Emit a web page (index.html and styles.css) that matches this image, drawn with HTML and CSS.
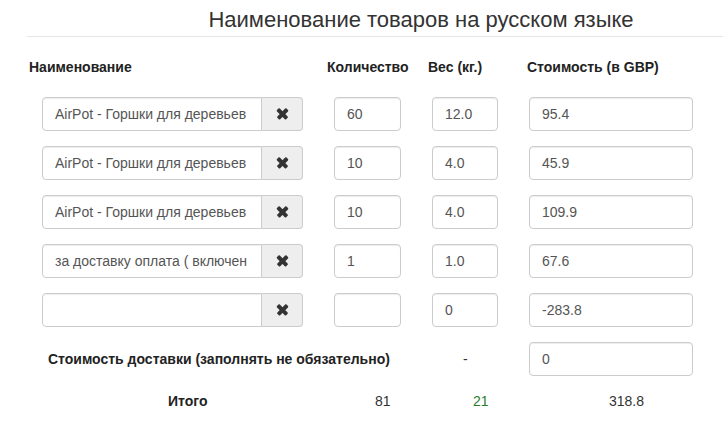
FILE: index.html
```html
<!DOCTYPE html>
<html>
<head>
<meta charset="utf-8">
<title>Товары</title>
<link rel="stylesheet" href="styles.css">
</head>
<body>

<div class="page">
    <h3 class="title">Наименование товаров на русском языке</h3>
    <hr class="line">

    <div class="sheet">
        <div class="th">Наименование</div>
        <div class="th th-qty">Количество</div>
        <div class="th th-w">Вес (кг.)</div>
        <div class="th th-cost">Стоимость (в GBP)</div>

        <div class="group"><input class="field name" value="AirPot - Горшки для деревьев"><span class="del"><i class="ico-x"></i></span></div>
        <div class="c-qty"><input class="field qty" value="60"></div>
        <div class="c-w"><input class="field w" value="12.0"></div>
        <div class="c-cost"><input class="field cost" value="95.4"></div>

        <div class="group"><input class="field name" value="AirPot - Горшки для деревьев"><span class="del"><i class="ico-x"></i></span></div>
        <div class="c-qty"><input class="field qty" value="10"></div>
        <div class="c-w"><input class="field w" value="4.0"></div>
        <div class="c-cost"><input class="field cost" value="45.9"></div>

        <div class="group"><input class="field name" value="AirPot - Горшки для деревьев"><span class="del"><i class="ico-x"></i></span></div>
        <div class="c-qty"><input class="field qty" value="10"></div>
        <div class="c-w"><input class="field w" value="4.0"></div>
        <div class="c-cost"><input class="field cost" value="109.9"></div>

        <div class="group"><input class="field name" value="за доставку оплата ( включен"><span class="del"><i class="ico-x"></i></span></div>
        <div class="c-qty"><input class="field qty" value="1"></div>
        <div class="c-w"><input class="field w" value="1.0"></div>
        <div class="c-cost"><input class="field cost" value="67.6"></div>

        <div class="group"><input class="field name" value=""><span class="del"><i class="ico-x"></i></span></div>
        <div class="c-qty"><input class="field qty" value=""></div>
        <div class="c-w"><input class="field w" value="0"></div>
        <div class="c-cost"><input class="field cost" value="-283.8"></div>

        <div class="ship-label">Стоимость доставки (заполнять не обязательно)</div>
        <div class="ship-dash">-</div>
        <div class="c-cost"><input class="field cost" value="0"></div>

        <div class="total total-label">Итого</div>
        <div class="total total-qty">81</div>
        <div class="total total-w">21</div>
        <div class="total total-cost">318.8</div>
    </div>
</div>

</body>
</html>
```

FILE: styles.css
```css
*{ box-sizing:border-box;}
body{ margin:0; font-family:"Liberation Sans", Arial, sans-serif; font-size:14px; color:#333; background:#fff;}

.title{ margin:5px 0 0 119px; height:30px; line-height:30px; font-size:22px; font-weight:normal; text-align:center; color:#333;}
.line{ margin:1px 0 0 27px; border:0; border-top:1px solid #e5e5e5; height:0;}

.sheet{ display:grid; grid-template-columns:298px 101px 99px 194px; row-gap:15px; margin:20px 0 0 29px;}

.th{ font-weight:bold; font-size:14px; line-height:20px; margin-bottom:5px; color:#222;}

.group{ display:flex; width:261px; height:34px; margin-left:13px;}
.c-qty{ padding-left:7px;}
.c-w{ padding-left:4px;}
.c-cost{ padding-left:2px;}

.field{ display:block; height:34px; padding:6px 12px; font-family:inherit; font-size:14px; color:#555; background:#fff;
    border:1px solid #ccc; border-radius:4px; box-shadow:inset 0 1px 1px rgba(0,0,0,.075); outline:none;}
.name{ flex:1; min-width:0; border-radius:4px 0 0 4px;}
.qty{ width:67px;}
.w{ width:66px;}
.cost{ width:164px;}

.del{ width:41px; display:flex; align-items:center; justify-content:center; background:#eee; border:1px solid #ccc; border-left:0; border-radius:0 4px 4px 0;}
.ico-x{ position:relative; width:12px; height:12px;}
.ico-x:before,.ico-x:after{ content:""; position:absolute; left:0; top:4px; width:13px; height:3.5px; background:#333; border-radius:1px; transform:rotate(45deg);}
.ico-x:after{ transform:rotate(-45deg);}

.ship-label{ grid-column:1 / 3; align-self:center; padding-left:19px; font-weight:bold; font-size:14px; color:#222;}
.ship-dash{ align-self:center; padding-left:35px;}

.total{ line-height:20px; font-size:14px;}
.total-label{ padding-left:139px; font-weight:bold; color:#222;}
.total-qty{ padding-left:48px;}
.total-w{ padding-left:45px; color:#2a7f2a;}
.total-cost{ padding-left:82px;}
```
